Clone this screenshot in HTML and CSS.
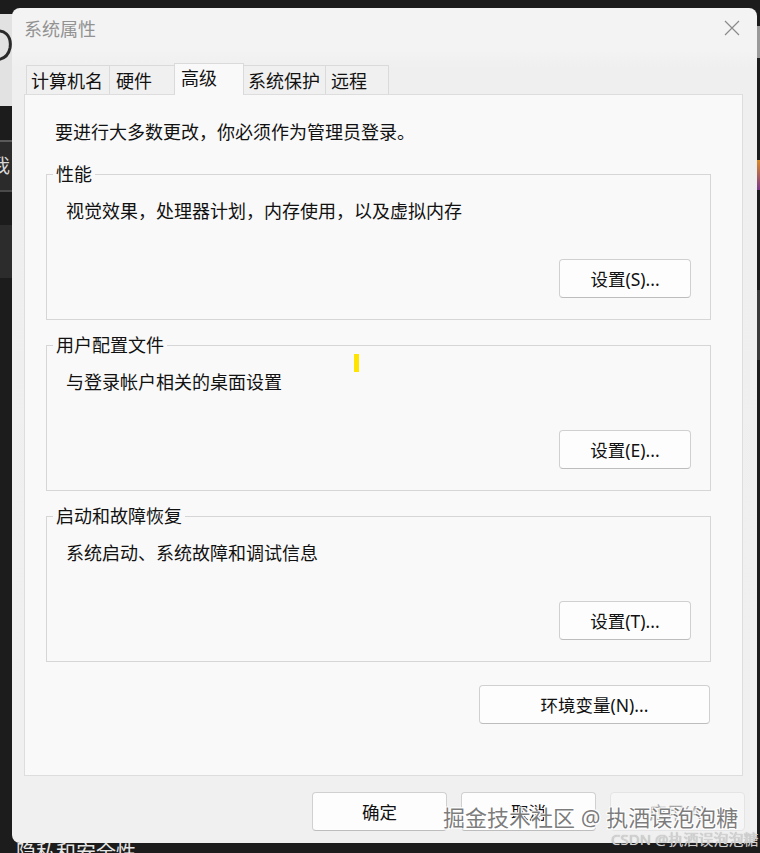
FILE: index.html
```html
<!DOCTYPE html>
<html lang="zh-CN">
<head>
<meta charset="utf-8">
<title>系统属性</title>
<link rel="stylesheet" href="styles.css">
</head>
<body>
<div class="desktop">
  <div class="dk dk-light">
    <svg class="dk-glyph" width="14" height="92" viewBox="0 0 14 92"><path d="M-6 18 C4 14 12 22 10 34 C8 44 0 46 -6 46" fill="none" stroke="#2a2a2a" stroke-width="3"/></svg>
  </div>
  <div class="dk dk-line1"></div>
  <div class="dk dk-band1"><span class="dk-char">我</span></div>
  <div class="dk dk-line2"></div>
  <div class="dk dk-band2"></div>
  <div class="dk dk-r1"></div>
  <div class="dk dk-r2"></div>
  <div class="dk dk-r3"></div>
  <div class="dk dk-bottom">隐私和安全性</div>
</div>

<div class="window">
  <div class="titlebar">
    <span class="title">系统属性</span>
    <svg class="close" width="16" height="16" viewBox="0 0 16 16" aria-label="关闭"><path d="M1 1 L15 15 M15 1 L1 15" stroke="#8a8a8a" stroke-width="1.2" fill="none"/></svg>
  </div>

  <div class="tabs">
    <div class="tab tab-1">计算机名</div>
    <div class="tab tab-2">硬件</div>
    <div class="tab tab-3 active">高级</div>
    <div class="tab tab-4">系统保护</div>
    <div class="tab tab-5">远程</div>
  </div>

  <div class="panel">
    <p class="notice">要进行大多数更改，你必须作为管理员登录。</p>

    <fieldset class="group">
      <legend>性能</legend>
      <p class="desc">视觉效果，处理器计划，内存使用，以及虚拟内存</p>
      <div class="actions"><button class="btn">设置(S)...</button></div>
    </fieldset>

    <fieldset class="group">
      <legend>用户配置文件</legend>
      <p class="desc">与登录帐户相关的桌面设置</p>
      <div class="actions"><button class="btn">设置(E)...</button></div>
    </fieldset>

    <fieldset class="group">
      <legend>启动和故障恢复</legend>
      <p class="desc">系统启动、系统故障和调试信息</p>
      <div class="actions"><button class="btn">设置(T)...</button></div>
    </fieldset>

    <div class="env-row"><button class="btn btn-env">环境变量(N)...</button></div>
  </div>

  <div class="footer">
    <button class="btn btn-foot">确定</button>
    <button class="btn btn-foot">取消</button>
    <button class="btn btn-foot" disabled>应用(A)</button>
  </div>
</div>

<div class="caret"></div>
<div class="watermark">掘金技术社区 @ 执酒误泡泡糖</div>
<div class="csdn">CSDN @执酒误泡泡糖</div>
</body>
</html>
```

FILE: styles.css
```css
* { box-sizing: border-box; }

body {
  margin: 0;
  width: 760px;
  height: 853px;
  overflow: hidden;
  position: relative;
  background: #1c1c1c;
  font-family: "Noto Sans", "Noto Sans CJK SC", sans-serif;
  color: #111;
}

/* desktop behind the dialog */
.dk { position: absolute; }
.dk-light { left: 0; top: 14px; width: 14px; height: 92px; background: #e2e2e2; overflow: hidden; }
.dk-glyph { display: block; }
.dk-line1 { left: 0; top: 140px; width: 14px; height: 2px; background: #5a5a5a; }
.dk-band1 { left: 0; top: 142px; width: 14px; height: 48px; background: #2b2b2b; overflow: hidden; }
.dk-char { position: absolute; left: -9px; top: 14px; font-size: 19px; line-height: 20px; color: #d8d8d8; }
.dk-line2 { left: 0; top: 190px; width: 14px; height: 2px; background: #4a4a4a; }
.dk-band2 { left: 0; top: 225px; width: 14px; height: 53px; background: #2c2c2c; }
.dk-r1 { left: 756px; top: 26px; width: 4px; height: 32px; background: #9a9a9a; }
.dk-r2 { left: 756px; top: 160px; width: 4px; height: 30px; background: linear-gradient(#d98a2a, #7a3a8a); }
.dk-r3 { left: 756px; top: 290px; width: 4px; height: 70px; background: #3a3a3a; }
.dk-bottom { left: 16px; top: 843px; font-size: 20px; line-height: 20px; color: #e6e6e6; white-space: nowrap; }

/* dialog window */
.window {
  position: absolute;
  left: 12px;
  top: 8px;
  width: 745px;
  height: 835px;
  border-radius: 8px;
  background: linear-gradient(#f3f3f3 0, #f3f3f3 42px, #efefef 60px, #f0f0f0 100%);
  display: flex;
  flex-direction: column;
  overflow: hidden;
}

.titlebar {
  height: 42px;
  padding: 0 17px 0 12px;
  display: flex;
  align-items: center;
  justify-content: space-between;
}
.title { font-size: 18px; line-height: 24px; color: #929292; }
.close { display: block; margin-top: -2px; }

.tabs {
  margin-top: 13px;
  padding-left: 14px;
  height: 31px;
  display: flex;
  align-items: flex-end;
}
.tab {
  height: 29px;
  border: 1px solid #dadada;
  border-bottom: none;
  background: #f0f0f0;
  font-size: 18px;
  line-height: 28px;
  padding-top: 1px;
  margin-right: -1px;
  white-space: nowrap;
  color: #111;
}
.tab.active {
  height: 32px;
  margin-bottom: -1px;
  background: #f9f9f9;
  padding-top: 0;
  z-index: 1;
}
.tab-1 { width: 84px; padding-left: 4px; }
.tab-2 { width: 66px; padding-left: 6px; }
.tab-3 { width: 70px; padding-left: 6px; }
.tab-4 { width: 83px; padding-left: 4px; }
.tab-5 { width: 64px; padding-left: 5px; }

.panel {
  margin-left: 12px;
  width: 719px;
  height: 682px;
  border: 1px solid #dddddd;
  background: #f9f9f9;
  padding: 25px 31px 0 21px;
}

.notice {
  margin: 0 0 19px 9px;
  font-size: 18px;
  line-height: 24px;
}

.group {
  margin: 0 0 14px 0;
  border: 1px solid #d6d6d6;
  padding: 14px 19px 21px 6px;
  min-width: 0;
}
.group legend {
  padding: 0 3px;
  font-size: 18px;
  line-height: 22px;
}
.desc {
  margin: 0 0 36px 13px;
  font-size: 18px;
  line-height: 24px;
}
.actions { display: flex; justify-content: flex-end; }

.btn {
  font-family: "Noto Sans", "Noto Sans CJK SC", sans-serif;
  font-size: 17.5px;
  line-height: 24px;
  color: #111;
  background: #fdfdfd;
  border: 1px solid #d0d0d0;
  border-bottom-color: #bdbdbd;
  border-radius: 4px;
  width: 132px;
  height: 39px;
  padding: 0;
}
.btn:disabled {
  background: #f6f6f6;
  border-color: #e4e4e4;
  color: #a6a6a6;
}

.env-row { display: flex; justify-content: flex-end; margin-top: 23px; padding-right: 1px; }
.btn-env { width: 231px; }

.footer {
  margin-top: 16px;
  padding-right: 12px;
  display: flex;
  justify-content: flex-end;
  gap: 14px;
}
.btn-foot { width: 135px; }

/* overlays */
.caret {
  position: absolute;
  left: 354px;
  top: 354px;
  width: 5px;
  height: 18px;
  background: #ffe400;
}
.watermark {
  position: absolute;
  left: 443px;
  top: 802px;
  font-size: 22px;
  line-height: 30px;
  white-space: nowrap;
  color: rgba(95, 95, 95, 0.82);
  text-shadow: 1px 1px 0 rgba(255,255,255,0.9), -1px -1px 0 rgba(255,255,255,0.9), 1px -1px 0 rgba(255,255,255,0.9), -1px 1px 0 rgba(255,255,255,0.9);
}
.csdn {
  position: absolute;
  left: 611px;
  top: 829px;
  font-size: 15px;
  line-height: 20px;
  white-space: nowrap;
  color: #d2d2d2;
  text-shadow: 0 0 1px rgba(120,120,120,0.6);
}
```
